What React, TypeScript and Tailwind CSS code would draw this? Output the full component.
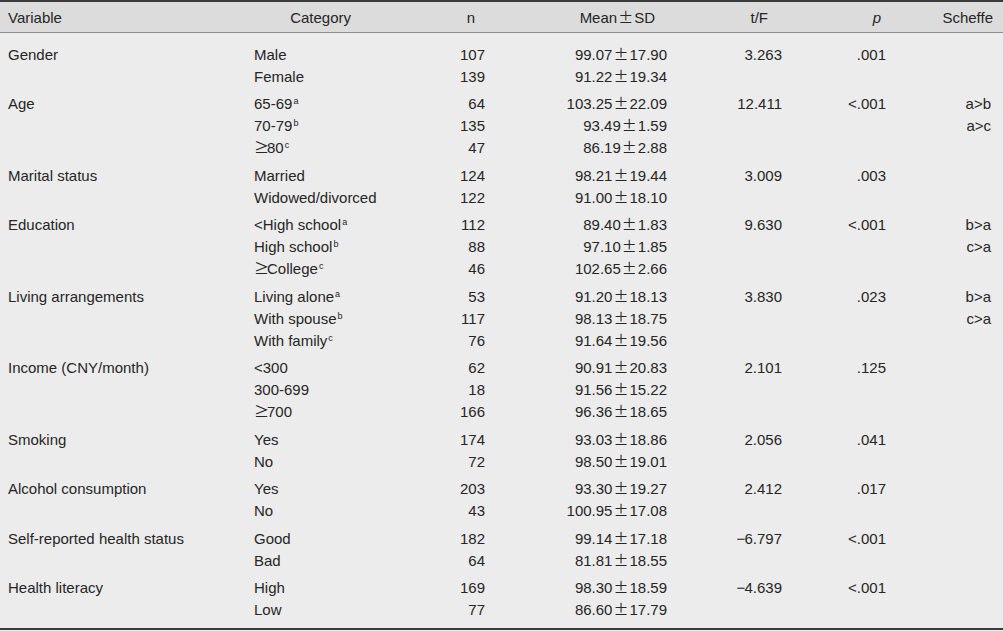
import React from "react";

type Line = [React.ReactNode, string, string, string, string?, string?, string?];
type Group = { name: string; lines: Line[] };

const cjk = { fontFamily: '"Noto Sans CJK KR", "Liberation Sans", sans-serif' };

const Sup = ({ c }: { c: string }) => (
  <sup className="text-[9px] -top-[5px] ml-[1px]">{c}</sup>
);
const Ge = () => (
  <span className="inline-block w-[13px] leading-none" style={cjk}>
    ≥
  </span>
);
const Pm = () => (
  <span className="inline-block w-[17px] text-center leading-none" style={cjk}>
    ±
  </span>
);

const groups: Group[] = [
  {
    name: "Gender",
    lines: [
      ["Male", "107", "99.07", "17.90", "3.263", ".001", ""],
      ["Female", "139", "91.22", "19.34"],
    ],
  },
  {
    name: "Age",
    lines: [
      [<>65-69<Sup c="a" /></>, "64", "103.25", "22.09", "12.411", "<.001", "a>b"],
      [<>70-79<Sup c="b" /></>, "135", "93.49", "1.59", "", "", "a>c"],
      [<><Ge />80<Sup c="c" /></>, "47", "86.19", "2.88"],
    ],
  },
  {
    name: "Marital status",
    lines: [
      ["Married", "124", "98.21", "19.44", "3.009", ".003"],
      ["Widowed/divorced", "122", "91.00", "18.10"],
    ],
  },
  {
    name: "Education",
    lines: [
      [<>&lt;High school<Sup c="a" /></>, "112", "89.40", "1.83", "9.630", "<.001", "b>a"],
      [<>High school<Sup c="b" /></>, "88", "97.10", "1.85", "", "", "c>a"],
      [<><Ge />College<Sup c="c" /></>, "46", "102.65", "2.66"],
    ],
  },
  {
    name: "Living arrangements",
    lines: [
      [<>Living alone<Sup c="a" /></>, "53", "91.20", "18.13", "3.830", ".023", "b>a"],
      [<>With spouse<Sup c="b" /></>, "117", "98.13", "18.75", "", "", "c>a"],
      [<>With family<Sup c="c" /></>, "76", "91.64", "19.56"],
    ],
  },
  {
    name: "Income (CNY/month)",
    lines: [
      ["<300", "62", "90.91", "20.83", "2.101", ".125"],
      ["300-699", "18", "91.56", "15.22"],
      [<><Ge />700</>, "166", "96.36", "18.65"],
    ],
  },
  {
    name: "Smoking",
    lines: [
      ["Yes", "174", "93.03", "18.86", "2.056", ".041"],
      ["No", "72", "98.50", "19.01"],
    ],
  },
  {
    name: "Alcohol consumption",
    lines: [
      ["Yes", "203", "93.30", "19.27", "2.412", ".017"],
      ["No", "43", "100.95", "17.08"],
    ],
  },
  {
    name: "Self-reported health status",
    lines: [
      ["Good", "182", "99.14", "17.18", "−6.797", "<.001"],
      ["Bad", "64", "81.81", "18.55"],
    ],
  },
  {
    name: "Health literacy",
    lines: [
      ["High", "169", "98.30", "18.59", "−4.639", "<.001"],
      ["Low", "77", "86.60", "17.79"],
    ],
  },
];

const cols = "grid grid-cols-[254px_146px_86px_182px_115px_103px_117px]";

const Neg = ({ v }: { v: string }) =>
  v.startsWith("−") ? (
    <>
      <span className="inline-block w-[8px] text-left">−</span>
      {v.slice(1)}
    </>
  ) : (
    <>{v}</>
  );

export default function App() {
  return (
    <div
      className="w-[1003px] h-[631px] bg-[#ececec] text-[#262626] text-[15px] leading-[22px] overflow-hidden"
      style={{ fontFamily: '"Liberation Sans", Arial, sans-serif' }}
    >
      <div className="border-t-2 border-[#3a3a3a]" />
      <div className={`${cols} h-[31px] pt-[2px] items-center bg-[#dcdcdc] border-b border-[#8c8c8c]`}>
        <div className="pl-[8px]">Variable</div>
        <div className="text-right pr-[49px]">Category</div>
        <div className="text-right pr-[11px]">n</div>
        <div className="text-right pr-[13px] whitespace-nowrap">
          Mean<Pm />SD
        </div>
        <div className="text-right pr-[15px]">t/F</div>
        <div className="text-right pr-[5px] italic">p</div>
        <div className="text-right pr-[10px]">Scheffe</div>
      </div>
      <div className="pt-[8.3px] pb-[4.3px]">
        {groups.map((g) => (
          <div key={g.name} className="py-[2.72px]">
            {g.lines.map((l, i) => (
              <div key={i} className={`${cols} h-[22px]`}>
                <div className="pl-[8px] whitespace-nowrap">{i === 0 ? g.name : ""}</div>
                <div className="whitespace-nowrap">{l[0]}</div>
                <div className="text-right pr-[1px]">{l[1]}</div>
                <div className="text-right pr-[1px] whitespace-nowrap">
                  {l[2]}
                  <Pm />
                  {l[3]}
                </div>
                <div className="text-right pr-[1px] whitespace-nowrap">
                  {l[4] ? <Neg v={l[4]} /> : ""}
                </div>
                <div className="text-right pr-[0px]">{l[5] ?? ""}</div>
                <div className="text-right pr-[12px]">{l[6] ?? ""}</div>
              </div>
            ))}
          </div>
        ))}
      </div>
      <div className="border-b-2 border-[#3a3a3a]" />
    </div>
  );
}
